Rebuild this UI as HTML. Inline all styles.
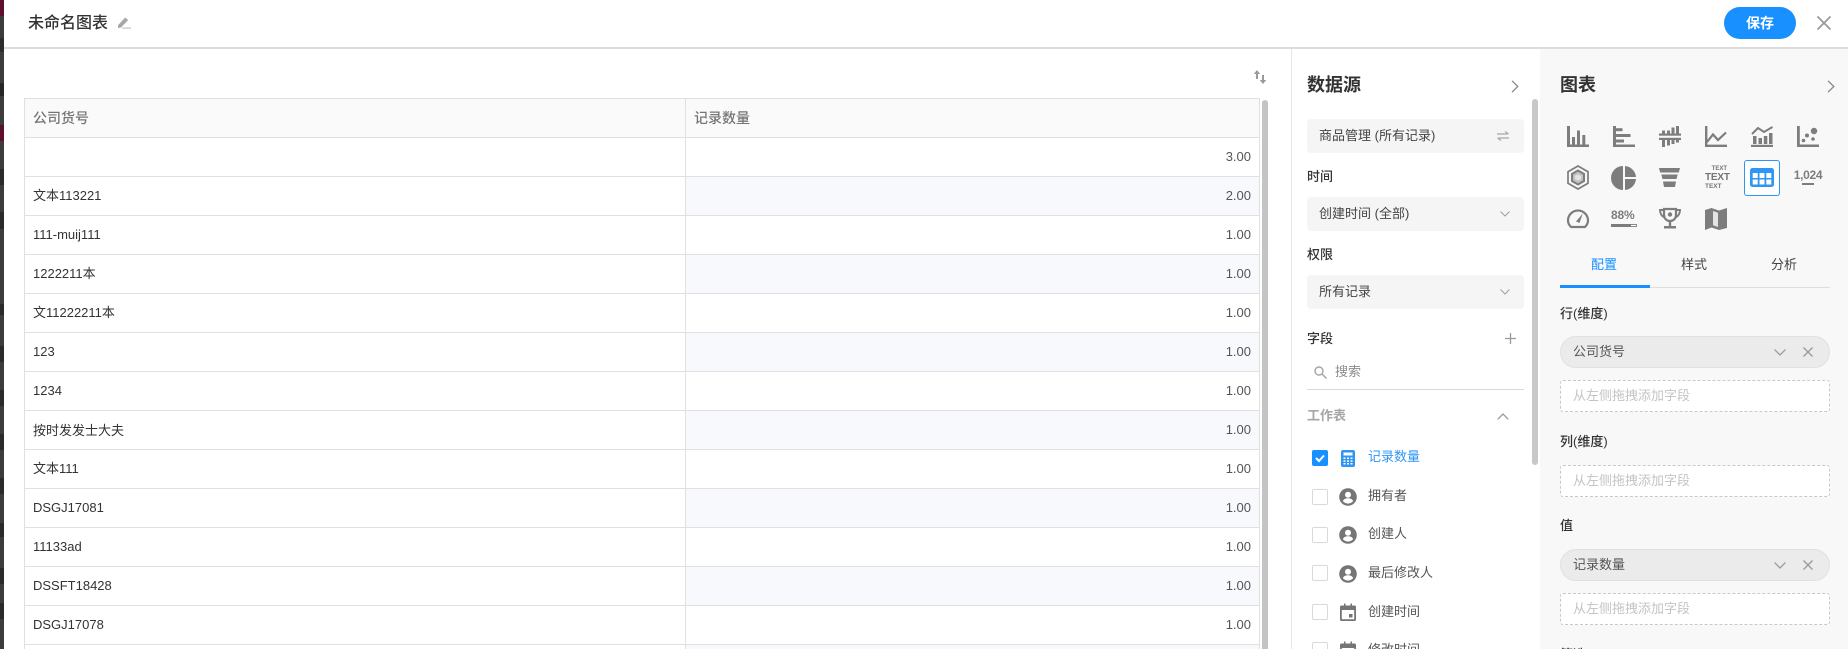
<!DOCTYPE html>
<html lang="zh"><head><meta charset="utf-8"><title>未命名图表</title>
<style>
*{box-sizing:border-box}
html,body{margin:0;padding:0;width:1848px;height:649px;overflow:hidden;background:#fff}
body{font-family:"Liberation Sans","Noto Sans CJK SC",sans-serif;font-size:13px;color:#333;position:relative}
.a{position:absolute;white-space:nowrap}
.t{line-height:20px}
.strip{left:0;top:0;width:4px;height:649px;background:#3c3c3c}
.strip i{position:absolute;left:0;width:4px;display:block}
.hline{left:4px;top:47px;width:1844px;height:2px;background:#dcdcdc;z-index:3}
.row{left:24px;width:1236px;height:1px;background:#e0e0e0}
.alt{left:686px;width:573px;height:38px;background:#f8f9fc}
.cell{left:33px;height:20px;line-height:20px;font-size:13px;color:#333}
.num{right:597px;height:20px;line-height:20px;font-size:13px;color:#555}
.sel{left:1307px;width:217px;height:34px;background:#f5f5f5;border-radius:4px;line-height:33px;padding-left:12px;color:#444;font-size:13px}
.lbl{font-size:13px;font-weight:500;color:#333;line-height:20px}
.cb{left:1312px;width:16px;height:16px;background:#fff;border:1px solid #d9d9d9;border-radius:2px}
.fl{left:1368px;line-height:20px;color:#555;font-size:13px}
.pill{left:1560px;width:270px;height:32px;background:#ebebeb;border:1px solid #e0e0e0;border-radius:16px;line-height:29px;padding-left:12px;color:#555;font-size:13px}
.dash{left:1560px;width:270px;height:32px;background:#fff;border:1px dashed #c8c8c8;border-radius:3px;line-height:29px;padding-left:12px;color:#c4c4c4;font-size:13px}
svg{position:absolute;display:block;overflow:visible}
</style></head><body>

<div class="a strip">
<i style="top:0;height:16px;background:#5e0f2e"></i>
<i style="top:38px;height:14px;background:#2c2c2c"></i>
<i style="top:83px;height:13px;background:#262626"></i>
<i style="top:125px;height:16px;background:#5e0f2e"></i>
<i style="top:169px;height:16px;background:#2a2a2a"></i>
<i style="top:212px;height:17px;background:#2a2a2a"></i>
<i style="top:304px;height:11px;background:#2a2a2a"></i>
<i style="top:346px;height:16px;background:#2a2a2a"></i>
<i style="top:390px;height:16px;background:#2a2a2a"></i>
<i style="top:434px;height:16px;background:#2a2a2a"></i>
<i style="top:478px;height:16px;background:#2a2a2a"></i>
<i style="top:523px;height:14px;background:#2a2a2a"></i>
<i style="top:568px;height:16px;background:#2a2a2a"></i>
<i style="top:603px;height:16px;background:#2a2a2a"></i>
</div>

<!-- header -->
<div class="a hline"></div>
<div class="a t" style="left:28px;top:14px;font-size:16px;font-weight:500;color:#333">未命名图表</div>
<svg style="left:117px;top:16px" width="14" height="13" viewBox="0 0 14 13"><path d="M1 9.200 8.200 1.500l3 2.500L4 11.500 1 12z" fill="#a6a6a6"/><rect x="5" y="11.500" width="9" height="1.200" fill="#c4c4c4"/></svg>
<div class="a" style="left:1724px;top:7px;width:72px;height:32px;background:#1890ff;border-radius:16px;color:#fff;font-weight:700;font-size:14px;line-height:32px;text-align:center">保存</div>
<svg style="left:1817px;top:16px" width="14" height="14" viewBox="0 0 14 14"><path d="M.5.5 13.500 13.500M13.500.5.5 13.500" stroke="#9a9a9a" stroke-width="1.800" fill="none"/></svg>

<!-- sort icon -->
<svg style="left:1253px;top:69px" width="14" height="16" viewBox="0 0 14 16"><path d="M4 1 .8 5H3v5h2V5h2.200zM10 15l3.200-4H11V6H9v5H6.800z" fill="#9a9a9a"/></svg>

<!-- table -->
<div class="a" style="left:24px;top:98px;width:1236px;height:39px;background:#fafafa"></div>
<div class="a alt" style="top:177px"></div><div class="a alt" style="top:255px"></div><div class="a alt" style="top:333px"></div><div class="a alt" style="top:411px"></div><div class="a alt" style="top:489px"></div><div class="a alt" style="top:567px"></div>
<div class="a alt" style="top:645px;height:4px"></div>
<div class="a row" style="top:98px"></div>
<div class="a row" style="top:137px"></div><div class="a row" style="top:176px"></div><div class="a row" style="top:215px"></div><div class="a row" style="top:254px"></div><div class="a row" style="top:293px"></div><div class="a row" style="top:332px"></div><div class="a row" style="top:371px"></div><div class="a row" style="top:410px"></div><div class="a row" style="top:449px"></div><div class="a row" style="top:488px"></div><div class="a row" style="top:527px"></div><div class="a row" style="top:566px"></div><div class="a row" style="top:605px"></div><div class="a row" style="top:644px"></div>
<div class="a" style="left:24px;top:98px;width:1px;height:551px;background:#e0e0e0"></div>
<div class="a" style="left:685px;top:98px;width:1px;height:551px;background:#e0e0e0"></div>
<div class="a" style="left:1259px;top:98px;width:1px;height:551px;background:#e0e0e0"></div>

<div class="a cell" style="top:108px;color:#757575;font-weight:500;font-size:14px">公司货号</div>
<div class="a cell" style="left:694px;top:108px;color:#757575;font-weight:500;font-size:14px">记录数量</div>
<div class="a cell" style="top:186px">文本113221</div>
<div class="a cell" style="top:225px">111-muij111</div>
<div class="a cell" style="top:264px">1222211本</div>
<div class="a cell" style="top:303px">文11222211本</div>
<div class="a cell" style="top:342px">123</div>
<div class="a cell" style="top:381px">1234</div>
<div class="a cell" style="top:421px">按时发发士大夫</div>
<div class="a cell" style="top:459px">文本111</div>
<div class="a cell" style="top:498px">DSGJ17081</div>
<div class="a cell" style="top:537px">11133ad</div>
<div class="a cell" style="top:576px">DSSFT18428</div>
<div class="a cell" style="top:615px">DSGJ17078</div>

<div class="a num" style="top:147px">3.00</div>
<div class="a num" style="top:186px">2.00</div>
<div class="a num" style="top:225px">1.00</div><div class="a num" style="top:264px">1.00</div><div class="a num" style="top:303px">1.00</div><div class="a num" style="top:342px">1.00</div><div class="a num" style="top:381px">1.00</div><div class="a num" style="top:420px">1.00</div><div class="a num" style="top:459px">1.00</div><div class="a num" style="top:498px">1.00</div><div class="a num" style="top:537px">1.00</div><div class="a num" style="top:576px">1.00</div><div class="a num" style="top:615px">1.00</div>

<div class="a" style="left:1262px;top:100px;width:6px;height:549px;background:#c4c4c4;border-radius:3px 3px 0 0"></div>

<!-- data source panel -->
<div class="a" style="left:1291px;top:49px;width:1px;height:600px;background:#e6e6e6"></div>
<div class="a" style="left:1532px;top:99px;width:6px;height:366px;background:#c8c8c8;border-radius:3px"></div>
<div class="a" style="left:1307px;top:73px;font-size:18px;font-weight:700;line-height:24px;color:#333">数据源</div>
<svg style="left:1511px;top:80px" width="8" height="13" viewBox="0 0 8 13"><path d="M1 .8 6.800 6.500 1 12.200" stroke="#8a8a8a" stroke-width="1.300" fill="none"/></svg>

<div class="a sel" style="top:119px">商品管理 (所有记录)</div>
<svg style="left:1496px;top:130px" width="14" height="12" viewBox="0 0 14 12"><path d="M1 4H11.500M9 1.500 12.500 4M13 8H2.500M5 10.500 1.500 8" stroke="#a8a8a8" stroke-width="1.200" fill="none"/></svg>
<div class="a lbl" style="left:1307px;top:167px">时间</div>
<div class="a sel" style="top:197px">创建时间 (全部)</div>
<svg style="left:1500px;top:211px" width="10" height="6" viewBox="0 0 10 6"><path d="M.5.500 5 5 9.500.500" stroke="#a0a0a0" stroke-width="1.100" fill="none"/></svg>
<div class="a lbl" style="left:1307px;top:245px">权限</div>
<div class="a sel" style="top:275px">所有记录</div>
<svg style="left:1500px;top:289px" width="10" height="6" viewBox="0 0 10 6"><path d="M.5.500 5 5 9.500.500" stroke="#a0a0a0" stroke-width="1.100" fill="none"/></svg>

<div class="a lbl" style="left:1307px;top:329px">字段</div>
<svg style="left:1505px;top:333px" width="11" height="11" viewBox="0 0 11 11"><path d="M5.500 0V11M0 5.500H11" stroke="#999" stroke-width="1.300"/></svg>
<svg style="left:1314px;top:366px" width="13" height="13" viewBox="0 0 13 13"><circle cx="5" cy="5" r="4" stroke="#a5a5a5" stroke-width="1.400" fill="none"/><path d="M8 8 12.500 12.500" stroke="#a5a5a5" stroke-width="1.500"/></svg>
<div class="a t" style="left:1335px;top:362px;color:#8c8c8c">搜索</div>
<div class="a" style="left:1307px;top:389px;width:217px;height:1px;background:#d9d9d9"></div>
<div class="a lbl" style="left:1307px;top:406px;color:#a6a6a6;font-weight:700">工作表</div>
<svg style="left:1497px;top:413px" width="12" height="7" viewBox="0 0 12 7"><path d="M.7 6.300 6 1l5.300 5.300" stroke="#999" stroke-width="1.300" fill="none"/></svg>

<div class="a cb" style="top:450px;background:#1890ff;border-color:#1890ff"></div>
<svg style="left:1312px;top:450px" width="16" height="16" viewBox="0 0 16 16"><path d="M4 8 7 11 12 5.500" stroke="#fff" stroke-width="2" fill="none"/></svg>
<svg style="left:1341px;top:450px" width="14" height="17" viewBox="0 0 14 17"><rect width="14" height="17" rx="2" fill="#2f96f3"/><rect x="2.500" y="2.500" width="9" height="3" fill="#fff"/><g fill="#fff"><rect x="2.500" y="7.500" width="2" height="1.500"/><rect x="6" y="7.500" width="2" height="1.500"/><rect x="9.500" y="7.500" width="2" height="1.500"/><rect x="2.500" y="10.300" width="2" height="1.500"/><rect x="6" y="10.300" width="2" height="1.500"/><rect x="9.500" y="10.300" width="2" height="1.500"/><rect x="2.500" y="13" width="2" height="1.500"/><rect x="6" y="13" width="2" height="1.500"/><rect x="9.500" y="13" width="2" height="1.500"/></g></svg>
<div class="a fl" style="top:447px;color:#2f96f3">记录数量</div>

<div class="a cb" style="top:489px"></div>
<svg style="left:1339px;top:488px" width="18" height="18" viewBox="0 0 18 18"><circle cx="9" cy="9" r="8.800" fill="#757575"/><circle cx="9" cy="6.800" r="3" fill="#fff"/><path d="M3.800 13c1-2 3-2.800 5.200-2.800S13.200 11 14.200 13A6.500 6.500 0 0 1 3.800 13z" fill="#fff"/></svg>
<div class="a fl" style="top:486px">拥有者</div>

<div class="a cb" style="top:527px"></div>
<svg style="left:1339px;top:526px" width="18" height="18" viewBox="0 0 18 18"><circle cx="9" cy="9" r="8.800" fill="#757575"/><circle cx="9" cy="6.800" r="3" fill="#fff"/><path d="M3.800 13c1-2 3-2.800 5.200-2.800S13.200 11 14.200 13A6.500 6.500 0 0 1 3.800 13z" fill="#fff"/></svg>
<div class="a fl" style="top:524px">创建人</div>

<div class="a cb" style="top:565px"></div>
<svg style="left:1339px;top:565px" width="18" height="18" viewBox="0 0 18 18"><circle cx="9" cy="9" r="8.800" fill="#757575"/><circle cx="9" cy="6.800" r="3" fill="#fff"/><path d="M3.800 13c1-2 3-2.800 5.200-2.800S13.200 11 14.200 13A6.500 6.500 0 0 1 3.800 13z" fill="#fff"/></svg>
<div class="a fl" style="top:563px">最后修改人</div>

<div class="a cb" style="top:604px"></div>
<svg style="left:1340px;top:603px" width="16" height="18" viewBox="0 0 16 18"><path d="M1.500 2.500H4V.5H5.500v2h5V.5H12v2h2.500A1.500 1.500 0 0 1 16 4v12.500a1.500 1.500 0 0 1-1.500 1.500h-13A1.500 1.500 0 0 1 0 16.500V4a1.500 1.500 0 0 1 1.500-1.500zM1.800 7v9.200h12.400V7z" fill="#757575"/><rect x="9" y="11" width="3.500" height="3.500" fill="#757575"/></svg>
<div class="a fl" style="top:602px">创建时间</div>

<div class="a cb" style="top:642px"></div>
<svg style="left:1340px;top:641px" width="16" height="18" viewBox="0 0 16 18"><path d="M1.500 2.500H4V.5H5.500v2h5V.5H12v2h2.500A1.500 1.500 0 0 1 16 4v12.500a1.500 1.500 0 0 1-1.500 1.500h-13A1.500 1.500 0 0 1 0 16.500V4a1.500 1.500 0 0 1 1.500-1.500zM1.800 7v9.200h12.400V7z" fill="#757575"/></svg>
<div class="a fl" style="top:640px">修改时间</div>

<!-- chart panel -->
<div class="a" style="left:1540px;top:49px;width:308px;height:600px;background:#f8f8f8"></div>
<div class="a" style="left:1560px;top:73px;font-size:18px;font-weight:700;line-height:24px;color:#333">图表</div>
<svg style="left:1827px;top:80px" width="8" height="13" viewBox="0 0 8 13"><path d="M1 .8 6.800 6.500 1 12.200" stroke="#8a8a8a" stroke-width="1.300" fill="none"/></svg>

<!-- chart icons row 1 -->
<svg style="left:1567px;top:126px" width="22" height="21" viewBox="0 0 22 21" fill="#7d7d7d"><path d="M0 0h3v18.500h19V21H0z"/><rect x="5" y="11" width="3" height="8"/><rect x="10" y="4.500" width="3" height="14.500"/><rect x="15.300" y="9" width="3" height="10"/></svg>
<svg style="left:1613px;top:126px" width="22" height="21" viewBox="0 0 22 21" fill="#7d7d7d"><path d="M0 0h3v18.500h19V21H0z"/><rect x="3" y="2.200" width="6.500" height="3"/><rect x="3" y="8" width="14.500" height="3"/><rect x="3" y="13.500" width="8" height="3"/></svg>
<svg style="left:1659px;top:126px" width="22" height="21" viewBox="0 0 22 21" fill="#7d7d7d"><rect x="0" y="7.500" width="22" height="2.200"/><rect x="0" y="11.800" width="22" height="2.200"/><rect x="3" y="4.500" width="3" height="3"/><rect x="3" y="14" width="3" height="7"/><rect x="8" y="4.500" width="3" height="3"/><rect x="8" y="14" width="3" height="5.500"/><rect x="12.500" y="1.500" width="3" height="6"/><rect x="12.500" y="14" width="3" height="4"/><rect x="17" y="0" width="3" height="7.500"/><rect x="17" y="14" width="3" height="2.500"/></svg>
<svg style="left:1705px;top:126px" width="22" height="21" viewBox="0 0 22 21"><path d="M1.200 0V19.800H22" stroke="#7d7d7d" stroke-width="2.400" fill="none"/><path d="M2 16 8 8.500l5 5.500 8-7.500" stroke="#7d7d7d" stroke-width="2.200" fill="none"/></svg>
<svg style="left:1751px;top:126px" width="22" height="21" viewBox="0 0 22 21" fill="#7d7d7d"><rect y="18.800" width="22" height="2.200"/><rect x="2" y="10" width="3.500" height="8"/><rect x="7.500" y="12" width="3.500" height="6"/><rect x="12.800" y="10" width="3.500" height="8"/><rect x="18" y="7" width="3.500" height="11"/><path d="M1 8 7 2l6 4 8.500-5" stroke="#7d7d7d" stroke-width="2" fill="none"/></svg>
<svg style="left:1797px;top:126px" width="22" height="21" viewBox="0 0 22 21" fill="#7d7d7d"><path d="M0 0h2.800v18.500H22V21H0z"/><circle cx="6.500" cy="14.500" r="1.800"/><circle cx="10" cy="9.500" r="2"/><circle cx="17" cy="5" r="3.200"/><circle cx="16" cy="13" r="1.800"/></svg>

<!-- row 2 -->
<svg style="left:1567px;top:165px" width="22" height="25" viewBox="0 0 22 25"><path d="M11 1 21 6.800V18.200L11 24 1 18.200V6.800z" stroke="#7d7d7d" stroke-width="1.700" fill="none"/><path d="M11 5.500 17 9v7l-6 3.500L5 16V9z" stroke="#7d7d7d" stroke-width="2" fill="#c4c4c4"/><path d="M11 9.500 14 11v3l-3 1.500L8 14v-3z" fill="#e4e4e4"/></svg>
<svg style="left:1612px;top:166px" width="24" height="24" viewBox="0 0 24 24" fill="#7d7d7d"><path d="M11 0v24A12 12 0 0 1 11 0z"/><path d="M13 0A12 12 0 0 1 24 11H13z"/><path d="M13 13H24A12 12 0 0 1 13 24z"/></svg>
<svg style="left:1659px;top:168px" width="21" height="19" viewBox="0 0 21 19" fill="#7d7d7d"><path d="M0 0H21L19.800 4.500H1.200z"/><path d="M2.300 6.500H18.700L17.500 11H3.500z"/><path d="M4 13.500H17L16 19H5z"/></svg>
<div class="a" style="left:1705px;top:167px;width:22px;height:22px;color:#757575;font-weight:700;font-family:'Liberation Sans',sans-serif"><span class="a" style="right:0;top:-1px;font-size:6px;line-height:7px">TEXT</span><span class="a" style="left:0;top:6px;font-size:10px;line-height:10px;letter-spacing:-.2px">TEXT</span><span class="a" style="left:0;top:16px;font-size:6.500px;line-height:7px">TEXT</span></div>
<div class="a" style="left:1744px;top:160px;width:36px;height:36px;background:#fff;border:1px solid #2f96f3;border-radius:3px"></div>
<svg style="left:1750px;top:168px" width="24" height="19" viewBox="0 0 24 19"><rect width="24" height="19" rx="2.500" fill="#2f96f3"/><g fill="#fff"><rect x="2.700" y="5" width="5" height="5"/><rect x="9.500" y="5" width="5" height="5"/><rect x="16.300" y="5" width="5" height="5"/><rect x="2.700" y="11.500" width="5" height="5"/><rect x="9.500" y="11.500" width="5" height="5"/><rect x="16.300" y="11.500" width="5" height="5"/></g></svg>
<div class="a" style="left:1793px;top:168px;width:30px;text-align:center;color:#7d7d7d;font-size:12px;font-weight:700;line-height:14px;letter-spacing:-.3px">1,024</div>
<div class="a" style="left:1802px;top:183px;width:12px;height:2px;background:#7d7d7d"></div>

<!-- row 3 -->
<svg style="left:1567px;top:209px" width="22" height="19" viewBox="0 0 22 19"><path d="M4 18H18C20 16 21 14 21 11.500A10 10 0 0 0 1 11.500C1 14 2 16 4 18z" stroke="#7d7d7d" stroke-width="2.200" fill="none"/><path d="M9 12.500 15.800 4.500l-3.300 9.500z" fill="#7d7d7d"/></svg>
<div class="a" style="left:1611px;top:208px;font-size:12px;font-weight:700;line-height:14px;color:#7d7d7d;letter-spacing:-.2px">88%</div>
<div class="a" style="left:1611px;top:224px;width:26px;height:3px;background:#fff;border:1px solid #8a8a8a"></div>
<div class="a" style="left:1611px;top:224px;width:20px;height:3px;background:#7d7d7d"></div>
<svg style="left:1659px;top:208px" width="22" height="21" viewBox="0 0 22 21"><path d="M5 1H17V6.500C17 10.500 14.500 13 11 13S5 10.500 5 6.500z" stroke="#7d7d7d" stroke-width="2.200" fill="none"/><path d="M5 2H1C1 6 2.500 8 5.500 9.500M17 2H21C21 6 19.500 8 16.500 9.500" stroke="#7d7d7d" stroke-width="1.900" fill="none"/><rect x="9.800" y="13" width="2.400" height="5" fill="#7d7d7d"/><rect x="5" y="18" width="12" height="2.500" fill="#7d7d7d"/><circle cx="11" cy="6.500" r="2.200" fill="#7d7d7d"/></svg>
<svg style="left:1705px;top:208px" width="22" height="22" viewBox="0 0 22 22"><path d="M0 2 6.500 0 14 2.500 22 0V20L14 22 6.500 19.500 0 22z" fill="#7d7d7d"/><path d="M8 3 13 4.800V19L8 17.200z" fill="#e4e4e4"/></svg>

<!-- tabs -->
<div class="a t" style="left:1591px;top:255px;color:#1890ff">配置</div>
<div class="a t" style="left:1681px;top:255px;color:#444">样式</div>
<div class="a t" style="left:1771px;top:255px;color:#444">分析</div>
<div class="a" style="left:1560px;top:287px;width:270px;height:1px;background:#dedede"></div>
<div class="a" style="left:1560px;top:285px;width:90px;height:3px;background:#1890ff"></div>

<!-- config -->
<div class="a lbl" style="left:1560px;top:304px">行(维度)</div>
<div class="a pill" style="top:336px">公司货号</div>
<svg style="left:1774px;top:349px" width="12" height="7" viewBox="0 0 12 7"><path d="M.6.600 6 6 11.400.600" stroke="#999" stroke-width="1.300" fill="none"/></svg>
<svg style="left:1803px;top:347px" width="10" height="10" viewBox="0 0 10 10"><path d="M.5.500 9.500 9.500M9.500.500.5 9.500" stroke="#999" stroke-width="1.300"/></svg>
<div class="a dash" style="top:380px">从左侧拖拽添加字段</div>
<div class="a lbl" style="left:1560px;top:432px">列(维度)</div>
<div class="a dash" style="top:465px">从左侧拖拽添加字段</div>
<div class="a lbl" style="left:1560px;top:516px">值</div>
<div class="a pill" style="top:549px">记录数量</div>
<svg style="left:1774px;top:562px" width="12" height="7" viewBox="0 0 12 7"><path d="M.6.600 6 6 11.400.600" stroke="#999" stroke-width="1.300" fill="none"/></svg>
<svg style="left:1803px;top:560px" width="10" height="10" viewBox="0 0 10 10"><path d="M.5.500 9.500 9.500M9.500.500.5 9.500" stroke="#999" stroke-width="1.300"/></svg>
<div class="a dash" style="top:593px">从左侧拖拽添加字段</div>
<div class="a lbl" style="left:1560px;top:645px">筛选</div>

</body></html>
